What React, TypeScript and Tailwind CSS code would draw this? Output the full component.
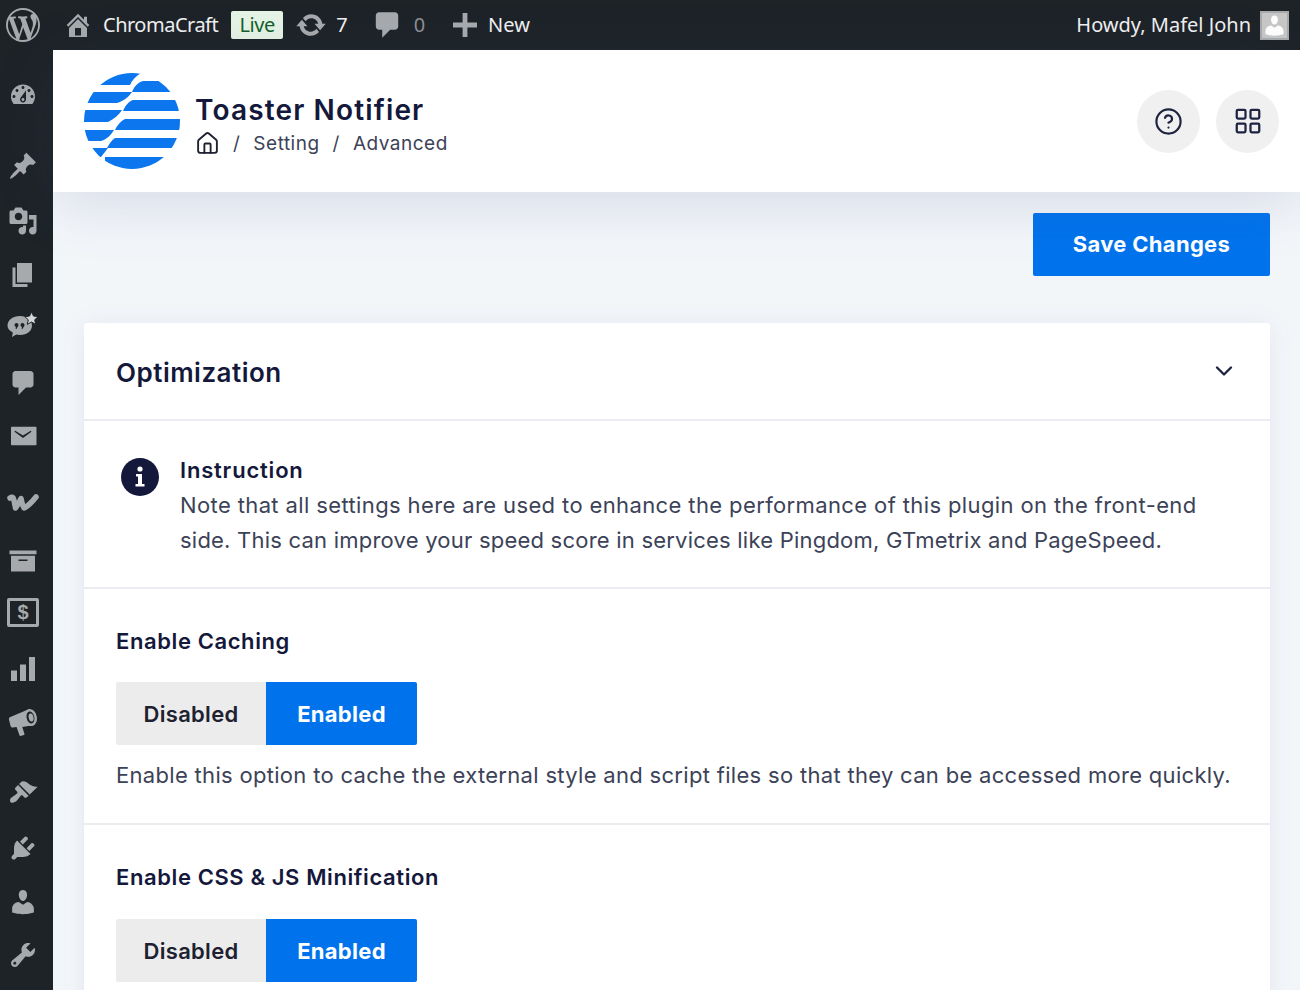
import React from "react";
import { ChevronDown, CircleHelp, House, LayoutGrid } from "lucide-react";

const D: Record<string, string> = {
  wp: "M20 10c0-5.51-4.49-10-10-10C4.48 0 0 4.49 0 10c0 5.52 4.48 10 10 10 5.51 0 10-4.48 10-10zM7.78 15.37L4.37 6.22c.55-.02 1.17-.08 1.17-.08.5-.06.44-1.13-.06-1.11 0 0-1.45.11-2.37.11-.18 0-.37 0-.58-.01C4.12 2.69 6.87 1.11 10 1.11c2.33 0 4.45.87 6.05 2.34-.68-.11-1.65.39-1.65 1.58 0 .74.45 1.36.9 2.1.35.61.55 1.36.55 2.46 0 1.49-1.4 5-1.4 5l-3.03-8.37c.54-.02.82-.17.82-.17.5-.05.44-1.25-.06-1.22 0 0-1.44.12-2.38.12-.87 0-2.33-.12-2.33-.12-.5-.03-.56 1.2-.06 1.22l.92.08 1.26 3.41zM17.41 10c.24-.64.74-1.87.43-4.25.7 1.29 1.05 2.71 1.05 4.25 0 3.29-1.73 6.24-4.4 7.78.97-2.59 1.94-5.2 2.92-7.78zM6.1 18.09C3.12 16.65 1.11 13.53 1.11 10c0-1.3.23-2.48.72-3.59C3.25 10.3 4.67 14.2 6.1 18.09zm4.03-6.63l2.58 6.98c-.86.29-1.76.45-2.71.45-.79 0-1.57-.11-2.29-.33.81-2.38 1.62-4.74 2.42-7.1z",
  home: "M16 8.5l1.53 1.53-1.06 1.06L10 4.62l-6.47 6.47-1.06-1.06L10 2.5l4 4v-2h2v4zm-6-2.46l6 5.99V18H4v-5.97zM12 17v-5H8v5h4z",
  update: "M10.2 3.28c3.53 0 6.43 2.61 6.92 6h2.08l-3.5 4-3.5-4h2.32c-.45-1.97-2.21-3.45-4.32-3.45-1.45 0-2.73.71-3.54 1.78L4.95 5.66C6.23 4.2 8.11 3.28 10.2 3.28zm-.4 13.44c-3.52 0-6.43-2.61-6.92-6H.8l3.5-4c1.17 1.33 2.33 2.67 3.5 4H5.48c.45 1.97 2.21 3.45 4.32 3.45 1.45 0 2.73-.71 3.54-1.78l1.71 1.95c-1.28 1.46-3.15 2.38-5.25 2.38z",
  comment: "M5 2h10c1.1 0 2 .9 2 2v7c0 1.1-.9 2-2 2h-3l-5 5v-5H5c-1.1 0-2-.9-2-2V4c0-1.1.9-2 2-2z",
  plus: "M17.5 8.5v3H11.5v6h-3v-6H2.500v-3h6v-6h3v6z",
  dashboard: "M3.76 16h12.48c1.1-1.37 1.76-3.11 1.76-5 0-4.42-3.58-8-8-8s-8 3.58-8 8c0 1.89.66 3.63 1.76 5zM10 4c.55 0 1 .45 1 1s-.45 1-1 1-1-.45-1-1 .45-1 1-1zM6 6c.55 0 1 .45 1 1s-.45 1-1 1-1-.45-1-1 .45-1 1-1zm8 0c.55 0 1 .45 1 1s-.45 1-1 1-1-.45-1-1 .45-1 1-1zm-5.37 5.55L12 7v6c0 1.1-.9 2-2 2s-2-.9-2-2c0-.57.24-1.08.63-1.45zM4 10c.55 0 1 .45 1 1s-.45 1-1 1-1-.45-1-1 .45-1 1-1zm12 0c.55 0 1 .45 1 1s-.45 1-1 1-1-.45-1-1 .45-1 1-1zm-5 3c0-.55-.45-1-1-1s-1 .45-1 1 .45 1 1 1 1-.45 1-1z",
  pin: "M10.44 3.02l1.82-1.82 6.36 6.35-1.83 1.82c-1.05-.68-2.48-.57-3.41.36l-.75.75c-.92.93-1.04 2.35-.35 3.41l-1.83 1.82-2.41-2.41-2.8 2.79c-.42.42-3.38 2.71-3.8 2.29s1.86-3.39 2.28-3.81l2.79-2.79L4.1 9.36l1.83-1.82c1.05.69 2.48.57 3.4-.36l.75-.75c.93-.92 1.05-2.35.36-3.41z",
  media: "M13 11V4c0-.55-.45-1-1-1h-1.67L9 1H5L3.67 3H2c-.55 0-1 .45-1 1v7c0 .55.45 1 1 1h10c.55 0 1-.45 1-1zM7 4.500c1.38 0 2.500 1.120 2.500 2.500S8.380 9.500 7 9.500 4.500 8.380 4.500 7 5.620 4.500 7 4.500zM14 6h5v10.500c0 1.380-1.120 2.500-2.500 2.500S14 17.880 14 16.500s1.120-2.500 2.500-2.500c.17 0 .34.02.5.05V9h-3V6zm-4 8.050V13h2v3.500c0 1.380-1.120 2.500-2.500 2.500S7 17.880 7 16.500 8.120 14 9.500 14c.17 0 .34.02.5.05z",
  page: "M6 15V2h10v13H6zm-1 1h8v2H3V5h2v11z",
  mail: "M19 15.500v-11c0-.4-.3-.7-.7-.7H2.700c-.4 0-.7.3-.7.7v11c0 .4.3.7.7.7h15.600c.4 0 .7-.3.7-.7zM4.600 7.300c-.4-.3-.1-1 .5-.7l4.900 3 4.900-3c.6-.3.9.4.5.7l-5.400 4z",
  archive: "M19 3v2.500H1V3h18zM2 6.500h16V17H2V6.500zm11 3.500V9H7v1h6z",
  chart: "M18 18V2h-4v16h4zm-6 0V7H8v11h4zm-6 0v-7H2v7h4z",
  brush: "M14.480 11.060L7.410 3.990l1.500-1.500c.5-.56 2.300-.47 3.510.32 1.210.8 1.430 1.280 2.910 2.100 1.180.64 2.450 1.260 4.450.85zm-.71.71L6.700 4.700 4.930 6.470c-.39.39-.39 1.020 0 1.410l1.060 1.060c.39.39.39 1.030 0 1.420-.6.6-1.430 1.110-2.210 1.690-.35.26-.7.53-1.010.84C1.430 13.230.91 15.240 1.760 16.090s2.860.33 4.200-1.010c.31-.31.58-.66.84-1.010.58-.78 1.090-1.610 1.690-2.210.39-.39 1.020-.39 1.410 0l1.060 1.060c.39.39 1.020.39 1.410 0z",
  plugin: "M13.110 4.360L9.870 7.600 8 5.730l3.240-3.240c.35-.34 1.050-.2 1.560.32.52.51.66 1.210.31 1.550zm-8 1.770l.91-1.120 9.010 9.010-1.190.84c-.71.71-2.630 1.160-3.820 1.160H6.140L4.900 17.260c-.59.59-1.540.59-2.120 0-.59-.58-.59-1.530 0-2.120l1.240-1.240v-3.880c0-1.130.4-3.190 1.090-3.890zm7.260 3.970l3.240-3.240c.34-.35 1.040-.21 1.550.31.52.51.66 1.210.31 1.550l-3.240 3.250z",
  user: "M10 9.250c-2.270 0-2.730-3.440-2.730-3.440C7 4.020 7.820 2 9.970 2c2.160 0 2.980 2.020 2.710 3.810 0 0-.41 3.440-2.68 3.440zm0 2.570L12.720 10c2.390 0 4.520 2.330 4.520 4.530v2.490s-3.650 1.130-7.240 1.130c-3.650 0-7.240-1.130-7.240-1.130v-2.490c0-2.250 1.940-4.480 4.470-4.480z",
  tools: "M16.680 9.770c-1.340 1.340-3.300 1.670-4.950.99l-5.410 6.520c-.99.99-2.590.99-3.580 0s-.99-2.590 0-3.570l6.520-5.420c-.68-1.650-.35-3.610.99-4.950 1.280-1.280 3.120-1.620 4.720-1.060l-2.890 2.890 2.820 2.820 2.860-2.870c.53 1.580.18 3.390-1.080 4.650zM3.810 16.210c.4.39 1.040.39 1.430 0 .4-.4.4-1.040 0-1.430-.39-.4-1.030-.4-1.430 0-.39.39-.39 1.030 0 1.430z",
};

function Dash({ name, className }: { name: string; className: string }) {
  return (
    <svg viewBox="0 0 20 20" className={className} fill="currentColor" aria-hidden="true">
      <path fillRule="evenodd" d={D[name]} />
    </svg>
  );
}

function Testimonial() {
  return (
    <svg viewBox="0 0 32 28" className="h-[28px] w-[32px]" aria-hidden="true">
      <path fill="#a7aaad" d="M13 5c7 0 12 4 12 9.500 0 5.500-5 9.500-12 9.500-1.300 0-2.600-.1-3.700-.4L5 26l.8-4.500C2.300 19.800.5 17.400.5 14.500.5 9 6 5 13 5z" />
      <circle cx="9.500" cy="14" r="2" fill="#1d2327" />
      <circle cx="15.500" cy="14" r="2" fill="#1d2327" />
      <path fill="#1d2327" d="M11.300 14.200l-1.700 3.800-1.100-.4.900-3.200zM17.300 14.200l-1.700 3.800-1.100-.4.900-3.200z" />
      <path fill="#d4d6d8" stroke="#1d2327" strokeWidth="1" d="M24.500 0.800l2 4.300 4.700.5-3.500 3.200 1 4.600-4.200-2.400-4.200 2.400 1-4.600-3.500-3.200 4.700-.5z" />
    </svg>
  );
}

function Woo() {
  return (
    <svg viewBox="0 0 32 20" className="h-[20px] w-[32px]" fill="none" aria-hidden="true">
      <path d="M3 6c2-1.500 3.300-.8 3.800 1.500L8.500 16c2.500-3 3.800-5.500 5.500-9.500.5 3 1.300 6.500 3 9.500 4.500-2 8-6 12-11" stroke="#a7aaad" strokeWidth="5.500" strokeLinejoin="round" strokeLinecap="round" />
    </svg>
  );
}

function Megaphone() {
  return (
    <svg viewBox="0 0 20 20" className="h-[30px] w-[30px]" aria-hidden="true">
      <path fill="#a7aaad" d="M.6 8.200c0-.8.4-1.300 1-1.500L13 1.800l2.500 10.600-6 .9 1.500 4.700c.1.300-.1.500-.4.600l-2.300.7c-.3.1-.5-.1-.6-.3L5.700 13.300l-2.500.3c-.7.1-1.300-.4-1.500-1z" />
      <ellipse cx="15" cy="7" rx="4.200" ry="5.800" transform="rotate(-12 15 7)" fill="#a7aaad" />
      <ellipse cx="15" cy="7" rx="2.600" ry="4.100" transform="rotate(-12 15 7)" fill="#1d2327" />
      <ellipse cx="15.400" cy="7" rx="1.600" ry="2.700" transform="rotate(-12 15.400 7)" fill="#a7aaad" />
    </svg>
  );
}

function Money() {
  return (
    <div className="flex h-[29px] w-[32px] shrink-0 items-center justify-center rounded-[2px] border-[3px] border-[#a7aaad] text-[20px] font-bold leading-none text-[#a7aaad] [font-family:'Liberation_Sans',sans-serif]">
      $
    </div>
  );
}

const sideIcon = "h-[30px] w-[30px]";
const sidebar: { mt: string; node: React.ReactNode }[] = [
  { mt: "mt-[30px]", node: <Dash name="dashboard" className={sideIcon} /> },
  { mt: "mt-[41px]", node: <Dash name="pin" className={sideIcon} /> },
  { mt: "mt-[25px]", node: <Dash name="media" className={sideIcon} /> },
  { mt: "mt-[24px]", node: <Dash name="page" className={sideIcon} /> },
  { mt: "mt-[20px]", node: <Testimonial /> },
  { mt: "mt-[28px]", node: <Dash name="comment" className={sideIcon} /> },
  { mt: "mt-[23px]", node: <Dash name="mail" className={sideIcon} /> },
  { mt: "mt-[36px]", node: <Woo /> },
  { mt: "mt-[29px]", node: <Dash name="archive" className={sideIcon} /> },
  { mt: "mt-[21px]", node: <Money /> },
  { mt: "mt-[27px]", node: <Dash name="chart" className={sideIcon} /> },
  { mt: "mt-[23px]", node: <Megaphone /> },
  { mt: "mt-[41px]", node: <Dash name="brush" className={sideIcon} /> },
  { mt: "mt-[25px]", node: <Dash name="plugin" className={sideIcon} /> },
  { mt: "mt-[24px]", node: <Dash name="user" className={sideIcon} /> },
  { mt: "mt-[23px]", node: <Dash name="tools" className={sideIcon} /> },
];

function Logo() {
  return (
    <svg viewBox="0 0 96 96" className="h-[96px] w-[96px] shrink-0" aria-hidden="true">
      <defs>
        <clipPath id="disc">
          <circle cx="48" cy="48" r="48" />
        </clipPath>
      </defs>
      <g clipPath="url(#disc)" fill="#0b76ee">
        <path d="M0 0H57C52 3 48 7 46 12H0Z" />
        <path d="M59 8C53 10 50 14 48 19H96V8Z" />
        <path d="M0 19H48C44 25 39 28 33 30H0Z" />
        <path d="M49 27C44 29 41 33 39 38H96V27Z" />
        <path d="M0 37H38C35 42 30 46 24 49H0Z" />
        <path d="M41 46C37 48 33 52 31 57H96V46Z" />
        <path d="M0 57H30C27 62 23 66 17 68H0Z" />
        <path d="M31 65C28 67 25 71 23 75H96V65Z" />
        <path d="M0 75H24L17 84H0Z" />
        <path d="M21 84H96V96H21Z" />
      </g>
    </svg>
  );
}

function Toggle() {
  return (
    <div className="flex h-[63px] w-[301px] overflow-hidden rounded-[2px] text-[22px] leading-none">
      <div className="flex w-[150px] items-center justify-center bg-[#ececec] font-semibold tracking-[0.3px] text-[#1d2130]">Disabled</div>
      <div className="flex w-[151px] items-center justify-center bg-[#0073ec] font-bold tracking-[0.3px] text-white">Enabled</div>
    </div>
  );
}

export default function App() {
  return (
    <div className="flex h-[990px] w-[1300px] flex-col overflow-hidden bg-[#f3f6f9] [font-family:Inter,sans-serif]">
      <div className="flex h-[50px] shrink-0 items-center bg-[#1d2327] pr-[11px] text-[20px] text-[#f0f0f1] [font-family:'Noto_Sans',sans-serif]">
        <Dash name="wp" className="ml-[6px] h-[34px] w-[34px] text-[#a7aaad]" />
        <Dash name="home" className="ml-[23px] h-[30px] w-[30px] text-[#a7aaad]" />
        <span className="ml-[10px] tracking-[-0.5px]">ChromaCraft</span>
        <span className="ml-[13px] flex h-[28px] w-[52px] items-center justify-center rounded-[2px] bg-[#e6f4e6] tracking-[-0.4px] text-[#11602a]">Live</span>
        <Dash name="update" className="ml-[12px] h-[32px] w-[32px] text-[#a7aaad]" />
        <span className="ml-[9px]">7</span>
        <Dash name="comment" className="ml-[23px] h-[32px] w-[32px] text-[#a7aaad]" />
        <span className="ml-[11px] text-[#8c8f94]">0</span>
        <Dash name="plus" className="ml-[24px] h-[32px] w-[32px] text-[#a7aaad]" />
        <span className="ml-[7px]">New</span>
        <span className="ml-auto">Howdy, Mafel John</span>
        <div className="ml-[9px] flex h-[29px] w-[29px] items-end justify-center overflow-hidden border-2 border-[#a9abad] bg-[#c8c8c8]">
          <Dash name="user" className="h-[25px] w-[25px] text-white" />
        </div>
      </div>

      <div className="flex min-h-0 flex-1">
        <div className="flex w-[53px] shrink-0 flex-col items-center bg-[#1d2327] text-[#a7aaad]">
          {sidebar.map((s, i) => (
            <div key={i} className={`flex h-[30px] w-full items-center justify-center pr-[7px] ${s.mt}`}>
              {s.node}
            </div>
          ))}
        </div>

        <div className="min-w-0 flex-1">
          <div className="relative z-10 flex h-[142px] items-center justify-between bg-white pl-[31px] pr-[21px] shadow-[0_12px_60px_rgba(70,80,140,0.16)]">
            <div className="flex items-center">
              <Logo />
              <div className="ml-[15px] flex flex-col pt-[7px]">
                <div className="text-[28px] font-semibold leading-[36px] tracking-[1.15px] text-[#14183b]">Toaster Notifier</div>
                <div className="mt-[2px] flex items-center text-[19px] leading-[28px] tracking-[0.5px] text-[#3c4257]">
                  <House className="h-[25px] w-[25px] text-[#1d2130]" strokeWidth={1.8} />
                  <span className="ml-[13px]">/</span>
                  <span className="ml-[13px]">Setting</span>
                  <span className="ml-[13px]">/</span>
                  <span className="ml-[13px]">Advanced</span>
                </div>
              </div>
            </div>
            <div className="flex gap-[16px]">
              <div className="flex h-[63px] w-[63px] items-center justify-center rounded-full bg-[#f0f0f0] text-[#1d2340]">
                <CircleHelp className="h-[29px] w-[29px]" strokeWidth={1.8} />
              </div>
              <div className="flex h-[63px] w-[63px] items-center justify-center rounded-full bg-[#f0f0f0] text-[#1d2340]">
                <LayoutGrid className="h-[30px] w-[30px]" strokeWidth={1.8} />
              </div>
            </div>
          </div>

          <div className="pl-[31px] pr-[30px] pt-[21px]">
            <div className="flex justify-end">
              <button className="h-[63px] w-[237px] rounded-[2px] bg-[#0073ec] text-[22px] font-bold tracking-[0.3px] text-white">Save Changes</button>
            </div>
            <div className="mt-[47px] rounded-[3px] bg-white shadow-[0_2px_24px_rgba(70,80,140,0.09)]">
              <div className="flex h-[98px] items-center justify-between border-b-2 border-[#ececf0] pl-[32px] pr-[32px]">
                <span className="mt-[3px] text-[26px] font-semibold tracking-[0.5px] text-[#14183b]">Optimization</span>
                <ChevronDown className="h-[28px] w-[28px] text-[#1d2340]" strokeWidth={2} />
              </div>
              <div className="flex border-b-2 border-[#ececf0] pb-[29px] pl-[37px] pr-[32px] pt-[32px]">
                <svg viewBox="0 0 38 38" className="mt-[5px] h-[38px] w-[38px] shrink-0" aria-hidden="true">
                  <circle cx="19" cy="19" r="19" fill="#14183b" />
                  <circle cx="19" cy="11" r="2.600" fill="#fff" />
                  <path fill="#fff" d="M15 16h6v10h2.500v2.500h-9V26H17v-7.500h-2z" />
                </svg>
                <div className="ml-[21px] text-[22px] leading-[35px] text-[#3c4257]">
                  <div className="font-semibold tracking-[0.8px] text-[#14183b]">Instruction</div>
                  <div className="tracking-[0.38px]">Note that all settings here are used to enhance the performance of this plugin on the front-end</div>
                  <div className="tracking-[0.22px]">side. This can improve your speed score in services like Pingdom, GTmetrix and PageSpeed.</div>
                </div>
              </div>
              <div className="border-b-2 border-[#ececf0] pb-[30px] pl-[32px] pr-[30px] pt-[35px]">
                <div className="text-[22px] font-semibold leading-[35px] tracking-[0.6px] text-[#14183b]">Enable Caching</div>
                <div className="mt-[23px]"><Toggle /></div>
                <div className="mt-[13px] text-[22px] leading-[35px] tracking-[0.31px] text-[#3c4257]">Enable this option to cache the external style and script files so that they can be accessed more quickly.</div>
              </div>
              <div className="pb-[40px] pl-[32px] pr-[30px] pt-[35px]">
                <div className="text-[22px] font-semibold leading-[35px] tracking-[0.6px] text-[#14183b]">Enable CSS &amp; JS Minification</div>
                <div className="mt-[24px]"><Toggle /></div>
              </div>
            </div>
          </div>
        </div>
      </div>
    </div>
  );
}
